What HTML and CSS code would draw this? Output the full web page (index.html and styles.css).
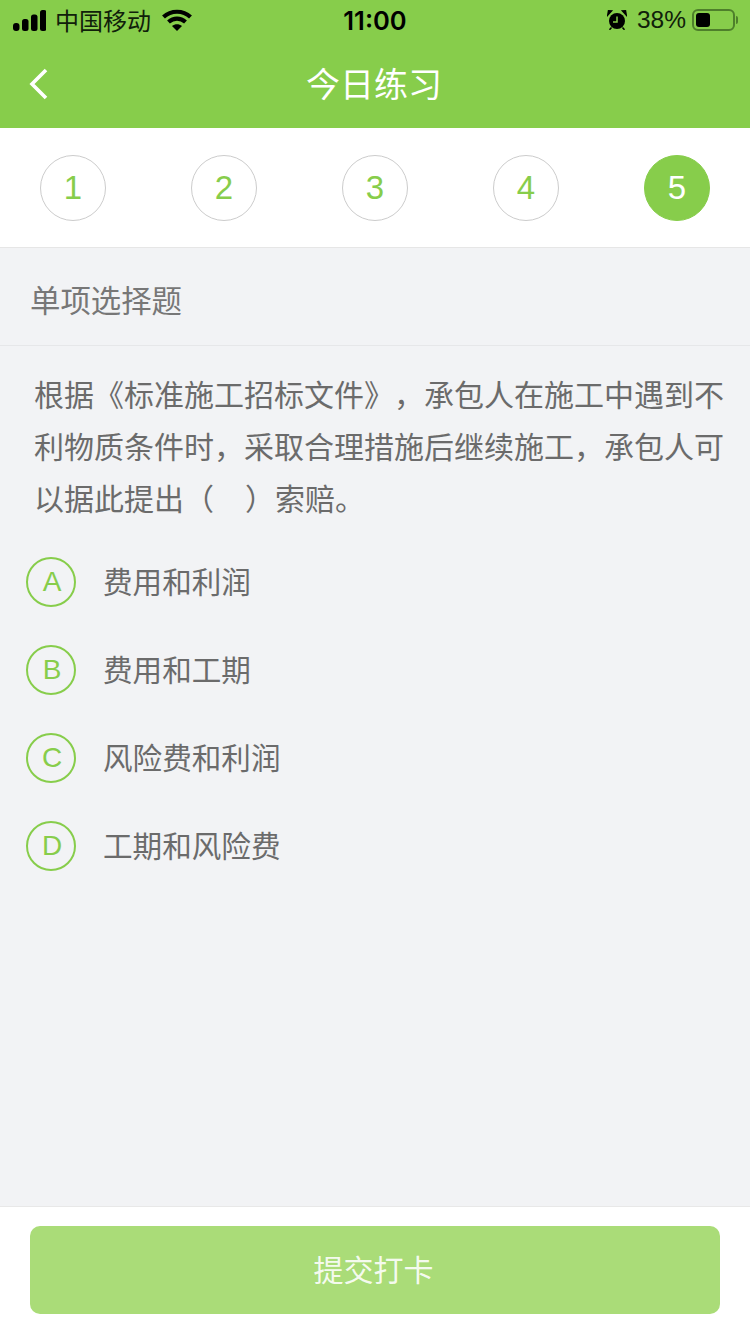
FILE: index.html
```html
<!DOCTYPE html>
<html lang="zh-CN">
<head>
    <meta charset="UTF-8">
    <meta name="viewport" content="width=device-width, initial-scale=1.0">
    <title>今日练习</title>
    <link rel="stylesheet" href="styles.css">
</head>
<body>
    <div class="page">
        <header class="top">
            <div class="status">
                <div class="status-left">
                    <svg class="signal" width="33" height="21" viewBox="0 0 33 21"><rect x="0" y="13" width="6.500" height="8" rx="3"/><rect x="9" y="9" width="6.500" height="12" rx="2.500"/><rect x="18" y="4.500" width="6.500" height="16.500" rx="2.500"/><rect x="27" y="0" width="6.500" height="21" rx="2.500"/></svg>
                    <span class="carrier">中国移动</span>
                    <svg class="wifi" width="30" height="22" viewBox="0 0 30 22"><path d="M1.500 8C9 1 21 1 28.500 8" fill="none" stroke="#000" stroke-width="4.200"/><path d="M6.500 13C11.500 8.500 18.500 8.500 23.500 13" fill="none" stroke="#000" stroke-width="4.200"/><path d="M10 17C13 14.800 17 14.800 20 17L15 22Z"/></svg>
                </div>
                <div class="clock">11:00</div>
                <div class="status-right">
                    <svg class="alarm" width="20" height="20" viewBox="0 0 20 20"><circle cx="10" cy="11" r="8"/><path d="M0.800 5L4.500 1 1.500 0.800ZM19.200 5L15.500 1 18.500 0.800Z" stroke="#000" stroke-width="1.500"/><path d="M10 6.500V12H6" fill="none" stroke="#87cd4b" stroke-width="1.500"/><path d="M4.500 17.500L2.500 19.800M15.500 17.500L17.500 19.800" stroke="#000" stroke-width="1.500"/></svg>
                    <span class="battery-text">38%</span>
                    <span class="battery"><span class="battery-fill"></span></span>
                    <span class="battery-cap"></span>
                </div>
            </div>
            <div class="nav">
                <svg class="back" width="20" height="32" viewBox="0 0 20 32"><path d="M17 2L3 16 17 30" fill="none" stroke="#fff" stroke-width="3.600"/></svg>
                <h1>今日练习</h1>
            </div>
        </header>

        <div class="steps">
            <span class="step">1</span>
            <span class="step">2</span>
            <span class="step">3</span>
            <span class="step">4</span>
            <span class="step active">5</span>
        </div>

        <div class="type">单项选择题</div>

        <main class="question">
            <p class="stem">根据《标准施工招标文件》，承包人在施工中遇到不利物质条件时，采取合理措施后继续施工，承包人可以据此提出（&nbsp;&nbsp;&nbsp;&thinsp;）索赔。</p>
            <ul class="options">
                <li class="option"><span class="letter">A</span><span class="option-text">费用和利润</span></li>
                <li class="option"><span class="letter">B</span><span class="option-text">费用和工期</span></li>
                <li class="option"><span class="letter">C</span><span class="option-text">风险费和利润</span></li>
                <li class="option"><span class="letter">D</span><span class="option-text">工期和风险费</span></li>
            </ul>
        </main>

        <footer class="bottom">
            <button class="submit">提交打卡</button>
        </footer>
    </div>
</body>
</html>
```
FILE: styles.css
```css
* {
    box-sizing: border-box;
}
body {
    margin: 0;
    font-family: "Liberation Sans", "Noto Sans CJK SC", sans-serif;
    background-color: #f2f3f5;
}
.page {
    width: 750px;
    height: 1334px;
    display: flex;
    flex-direction: column;
    overflow: hidden;
}
.top {
    height: 128px;
    background-color: #87cd4b;
}
.status {
    height: 40px;
    padding: 0 12px 0 13px;
    display: flex;
    justify-content: space-between;
    align-items: center;
    position: relative;
}
.status-left, .status-right {
    display: flex;
    align-items: center;
}
.signal {
    margin-right: 9px;
}
.carrier {
    margin-bottom: 2px;
    font-size: 24px;
    color: #10200a;
}
.wifi {
    margin-left: 11px;
}
.clock {
    position: absolute;
    left: 0;
    right: 0;
    text-align: center;
    font-family: "Inter", sans-serif;
    font-size: 25.500px;
    font-weight: 600;
    color: #000;
}
.alarm {
    margin-right: 10px;
}
.battery-text {
    font-size: 24.500px;
    color: #10200a;
    margin-right: 6px;
}
.battery {
    width: 43px;
    height: 22px;
    border: 2px solid #4e7f2b;
    border-radius: 6px;
    padding: 2px;
    display: flex;
}
.battery-fill {
    width: 14px;
    background-color: #000;
    border-radius: 3px;
}
.battery-cap {
    width: 2px;
    height: 8px;
    margin-left: 1px;
    background-color: #4e7f2b;
    border-radius: 0 2px 2px 0;
}
.nav {
    height: 88px;
    display: flex;
    align-items: center;
    justify-content: center;
    position: relative;
}
.nav h1 {
    margin: 0 2px 4px 0;
    font-size: 34px;
    font-weight: normal;
    color: #fff;
}
.back {
    position: absolute;
    left: 29px;
    top: 28px;
}
.steps {
    height: 120px;
    padding: 0 40px;
    display: flex;
    justify-content: space-between;
    align-items: center;
    background-color: #fff;
    border-bottom: 1px solid #e6e6e6;
}
.step {
    width: 66px;
    height: 66px;
    border: 1px solid #cccccc;
    border-radius: 50%;
    display: flex;
    align-items: center;
    justify-content: center;
    font-size: 33px;
    color: #87cd4b;
}
.step.active {
    background-color: #87cd4b;
    border-color: #87cd4b;
    color: #fff;
}
.type {
    height: 98px;
    padding: 9px 30px 0;
    display: flex;
    align-items: center;
    font-size: 30.400px;
    line-height: 36px;
    color: #777;
    border-bottom: 1px solid #e6e7e9;
}
.question {
    flex: 1;
    padding: 24px 26px 0;
}
.stem {
    margin: 0 0 31px;
    padding: 0 0 0 8px;
    font-size: 30px;
    line-height: 52px;
    color: #6b6b6b;
    text-spacing-trim: space-all;
}
.options {
    list-style: none;
    margin: 0;
    padding: 0;
}
.option {
    height: 50px;
    margin-bottom: 38px;
    display: flex;
    align-items: center;
    font-size: 29.600px;
    color: #6b6b6b;
}
.option-text {
    margin-bottom: 4px;
}
.letter {
    width: 50px;
    height: 50px;
    margin-right: 27px;
    padding-left: 2px;
    border: 2px solid #87cd4b;
    border-radius: 50%;
    display: flex;
    align-items: center;
    justify-content: center;
    font-size: 28px;
    color: #87cd4b;
}
.bottom {
    height: 128px;
    padding: 19px 30px 0;
    background-color: #fff;
    border-top: 1px solid #e8e8e8;
}
.submit {
    display: block;
    width: 100%;
    height: 88px;
    padding: 0 3px 4px 0;
    border: none;
    border-radius: 10px;
    background-color: #aadc78;
    color: rgba(255, 255, 255, 0.9);
    font-family: inherit;
    font-size: 30px;
}
```
